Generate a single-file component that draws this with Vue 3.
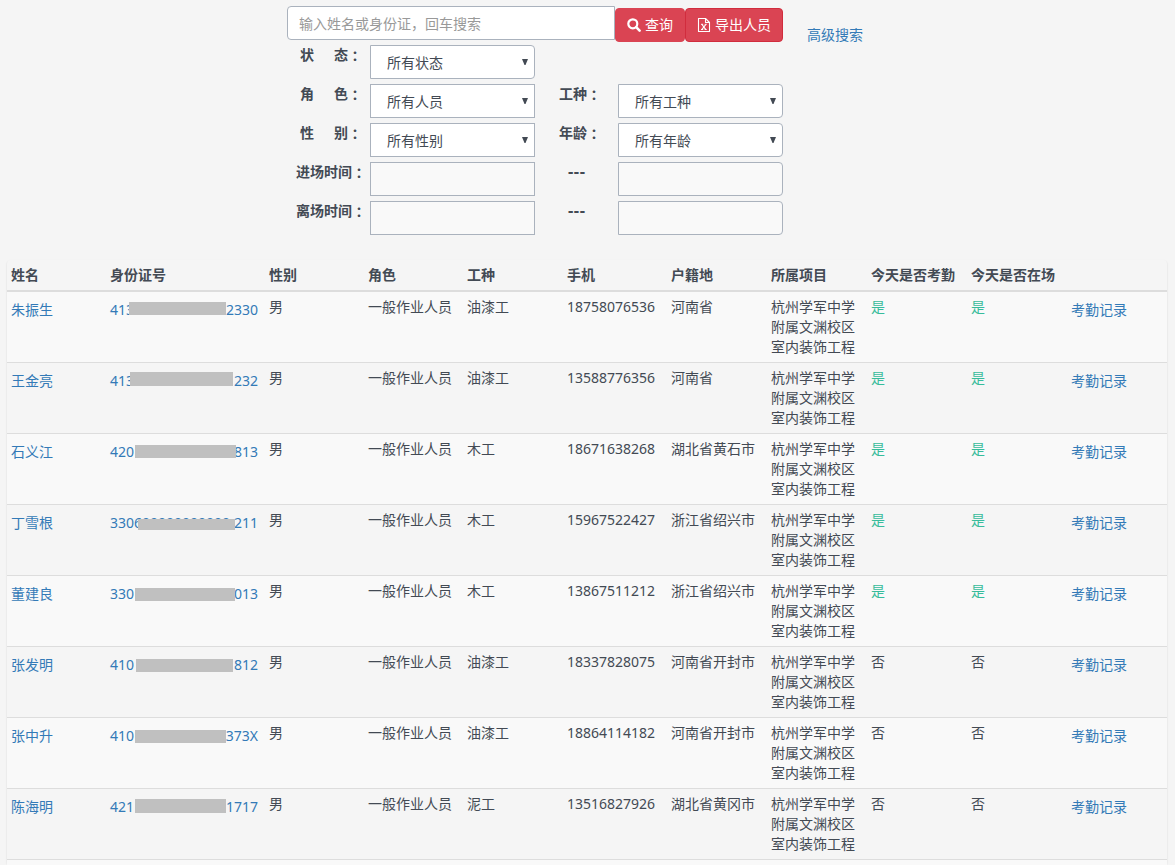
<script setup>
import { ref } from 'vue'

const keyword = ref('')

const filters = [
  { id: 'status', spread: ['状', '态'], option: '所有状态', end: true },
  { id: 'role', spread: ['角', '色'], option: '所有人员', pair: { id: 'craft', label: '工种', option: '所有工种' } },
  { id: 'gender', spread: ['性', '别'], option: '所有性别', pair: { id: 'age', label: '年龄', option: '所有年龄' } }
]

const ranges = [
  { id: 'enter', label: '进场时间' },
  { id: 'leave', label: '离场时间' }
]

const columns = [
  { key: 'name', title: '姓名' },
  { key: 'idno', title: '身份证号' },
  { key: 'gender', title: '性别' },
  { key: 'role', title: '角色' },
  { key: 'craft', title: '工种' },
  { key: 'phone', title: '手机' },
  { key: 'origin', title: '户籍地' },
  { key: 'project', title: '所属项目' },
  { key: 'attended', title: '今天是否考勤' },
  { key: 'present', title: '今天是否在场' },
  { key: 'action', title: '' }
]

// mask: [left, top, width, height] of the bar that hides the middle of the ID number
const people = [
  { name: '朱振生', head: '413', tail: '2330', mask: [19, 5, 97, 13], craft: '油漆工', phone: '18758076536', origin: '河南省', here: true },
  { name: '王金亮', head: '413', tail: '232', mask: [20, 4, 103, 14], craft: '油漆工', phone: '13588776356', origin: '河南省', here: true },
  { name: '石义江', head: '420', tail: '813', mask: [25, 6, 101, 13], craft: '木工', phone: '18671638268', origin: '湖北省黄石市', here: true },
  { name: '丁雪根', head: '330600000000000', tail: '211', mask: [28, 9, 97, 11], craft: '木工', phone: '15967522427', origin: '浙江省绍兴市', here: true },
  { name: '董建良', head: '330', tail: '013', mask: [25, 7, 100, 13], craft: '木工', phone: '13867511212', origin: '浙江省绍兴市', here: true },
  { name: '张发明', head: '410', tail: '812', mask: [26, 7, 97, 13], craft: '油漆工', phone: '18337828075', origin: '河南省开封市', here: false },
  { name: '张中升', head: '410', tail: '373X', mask: [25, 7, 91, 13], craft: '油漆工', phone: '18864114182', origin: '河南省开封市', here: false },
  { name: '陈海明', head: '421', tail: '1717', mask: [25, 5, 91, 14], craft: '泥工', phone: '13516827926', origin: '湖北省黄冈市', here: false }
]

const maskStyle = ([left, top, width, height]) => ({
  left: `${left}px`,
  top: `${top}px`,
  width: `${width}px`,
  height: `${height}px`
})
</script>

<template>
  <main class="page">
    <form class="search" @submit.prevent>
      <div class="search-row">
        <input v-model="keyword" class="keyword" type="text" aria-label="姓名或身份证" placeholder="输入姓名或身份证，回车搜索" />
        <button class="btn btn-plain" type="submit">
          <svg class="icon" viewBox="0 0 14 14" aria-hidden="true">
            <circle cx="5.8" cy="5.8" r="4.5" fill="none" stroke="currentColor" stroke-width="2.2" />
            <path d="M9.2 9.2 L12.6 12.6" stroke="currentColor" stroke-width="2.6" stroke-linecap="round" />
          </svg>
          查询
        </button>
        <button class="btn btn-export" type="button">
          <svg class="icon" viewBox="0 0 14 14" aria-hidden="true">
            <path d="M1.5 0.5 H8.5 L12.5 4.5 V13.5 H1.5 Z M8.5 0.5 V4.5 H12.5" fill="none" stroke="currentColor" stroke-width="1.1" stroke-linejoin="round" />
            <path d="M5 6.5 L8.6 11.3 M8.8 6.5 L5 11.3" stroke="currentColor" stroke-width="1.2" />
            <path d="M4 6.3 H6.2 M7.7 6.3 H9.7 M4 11.5 H6.2 M7.7 11.5 H9.7" stroke="currentColor" stroke-width="1" />
          </svg>
          导出人员
        </button>
        <a class="advanced" href="#">高级搜索</a>
      </div>

      <div v-for="f in filters" :key="f.id" class="filter-row">
        <label class="label label-spread" :for="f.id"><span>{{ f.spread[0] }}</span><span>{{ f.spread[1] }}</span><span class="colon">：</span></label>
        <span class="select-box">
          <select :id="f.id" class="field select" :class="{ rounded: f.end }"><option>{{ f.option }}</option></select>
          <svg class="arrow" viewBox="0 0 6 6" aria-hidden="true"><path d="M0 0 H6 L3.5 6 H2.5 Z" fill="currentColor" /></svg>
        </span>
        <template v-if="f.pair">
          <label class="label label-pair" :for="f.pair.id">{{ f.pair.label }}<span class="colon">：</span></label>
          <span class="select-box">
            <select :id="f.pair.id" class="field select rounded"><option>{{ f.pair.option }}</option></select>
            <svg class="arrow" viewBox="0 0 6 6" aria-hidden="true"><path d="M0 0 H6 L3.5 6 H2.5 Z" fill="currentColor" /></svg>
          </span>
        </template>
      </div>

      <div v-for="r in ranges" :key="r.id" class="filter-row">
        <label class="label label-date" :for="r.id">{{ r.label }}<span class="colon">：</span></label>
        <input :id="r.id" class="field date" type="text" />
        <label class="label label-dash" :for="r.id + '-end'">---</label>
        <input :id="r.id + '-end'" class="field date rounded" type="text" />
      </div>
    </form>

    <table class="people">
      <colgroup>
        <col v-for="c in columns" :key="c.key" :class="'col-' + c.key" />
      </colgroup>
      <thead>
        <tr>
          <th v-for="c in columns" :key="c.key" scope="col">{{ c.title }}</th>
        </tr>
      </thead>
      <tbody>
        <tr v-for="p in people" :key="p.phone">
          <td><a class="cell-link" href="#">{{ p.name }}</a></td>
          <td>
            <a class="cell-link idno" href="#"><span>{{ p.head }}</span><span>{{ p.tail }}</span><span class="mask" :style="maskStyle(p.mask)"></span></a>
          </td>
          <td>男</td>
          <td>一般作业人员</td>
          <td>{{ p.craft }}</td>
          <td>{{ p.phone }}</td>
          <td>{{ p.origin }}</td>
          <td>杭州学军中学附属文渊校区室内装饰工程</td>
          <td :class="{ yes: p.here }">{{ p.here ? '是' : '否' }}</td>
          <td :class="{ yes: p.here }">{{ p.here ? '是' : '否' }}</td>
          <td><a class="cell-link" href="#">考勤记录</a></td>
        </tr>
        <tr class="next"><td v-for="c in columns" :key="c.key"></td></tr>
      </tbody>
    </table>
  </main>
</template>

<style>
html {
  background: #f5f5f5;
}
body {
  overflow-x: hidden;
}
</style>

<style scoped>
.page,
.page input,
.page select,
.page button {
  font-family: "Noto Sans", "Noto Sans CJK SC", sans-serif;
  font-size: 14px;
  line-height: 20px;
  color: #434a54;
}
.page {
  padding: 6px 8px 0 7px;
}
.page * {
  box-sizing: border-box;
}
.page a {
  color: #337ab7;
  text-decoration: none;
}

.search {
  max-width: 600px;
  margin: 0 auto;
}
.search-row {
  display: flex;
  align-items: flex-start;
  height: 39px;
}
.page .keyword {
  width: 328px;
  height: 34px;
  padding: 0 11px;
  border: 1px solid #aab2bd;
  border-radius: 4px 0 0 4px;
  background: #fff;
}
.keyword::placeholder {
  color: #999;
  opacity: 1;
}
.page .btn {
  display: flex;
  align-items: center;
  gap: 4px;
  height: 34px;
  margin-top: 2px;
  padding: 0 11px;
  border: 1px solid #da4453;
  border-radius: 4px;
  background: #da4453;
  color: #fff;
  white-space: nowrap;
}
.page .btn-export {
  border-color: #d12c3d;
}
.icon {
  width: 14px;
  height: 14px;
}
.advanced {
  margin: 19px 0 0 24px;
  white-space: nowrap;
}

.filter-row {
  display: grid;
  grid-template-columns: 83px 165px 83px 165px;
  height: 39px;
}
.label {
  display: flex;
  height: 20px;
  font-weight: 700;
}
.label-spread {
  padding-left: 13px;
}
.label-spread span:first-child {
  margin-right: 20px;
}
.label-date {
  padding-left: 9px;
}
.label-pair {
  padding-left: 24px;
}
.label-dash {
  justify-content: center;
  font-family: "DejaVu Sans", sans-serif;
}
.colon {
  font-family: "Noto Sans CJK TC", sans-serif;
}
.select-box {
  position: relative;
  height: 34px;
}
.page .field {
  width: 165px;
  height: 34px;
  border: 1px solid #aab2bd;
  border-radius: 0;
  background: #f9f9f9;
}
.page .select {
  display: block;
  appearance: none;
  padding: 2px 16px 0;
  background: #fff;
}
.page .rounded {
  border-radius: 0 4px 4px 0;
}
.arrow {
  position: absolute;
  top: 14px;
  right: 7px;
  width: 6px;
  height: 6px;
  pointer-events: none;
}

.people {
  width: 100%;
  margin-top: 20px;
  table-layout: fixed;
  border-collapse: separate;
  border-spacing: 0;
  border-radius: 4px;
  box-shadow: 0 1px 2px rgba(0, 0, 0, 0.14);
}
.people th,
.people td {
  padding: 5px 5px 5px 4px;
  text-align: left;
  vertical-align: top;
}
.people th {
  height: 32px;
  padding-right: 0;
  border-bottom: 2px solid #ddd;
  font-weight: 700;
  white-space: nowrap;
}
.people td {
  border-bottom: 1px solid #ddd;
}
.people tbody tr:nth-child(odd) {
  background: #f9f9f9;
}
.people .next td {
  height: 5px;
  padding: 0;
  border-bottom: 0;
}
.col-idno {
  width: 159px;
}
.col-name,
.col-gender,
.col-role {
  width: 99px;
}
.col-craft,
.col-origin,
.col-project,
.col-attended,
.col-present,
.col-action {
  width: 100px;
}
.col-phone {
  width: 104px;
}
.cell-link {
  display: inline-block;
  line-height: 26px;
}
.idno {
  position: relative;
  display: flex;
  justify-content: space-between;
  width: 148px;
}
.mask {
  position: absolute;
  background: #c0c0c0;
}
.people .yes {
  color: #37bc9b;
}
</style>
